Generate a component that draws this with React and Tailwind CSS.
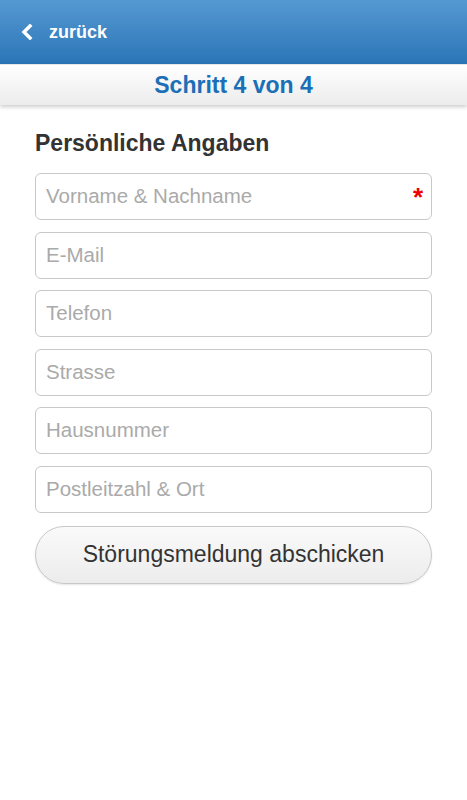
import React from "react";

const fields = [
  { label: "Vorname & Nachname", required: true },
  { label: "E-Mail" },
  { label: "Telefon" },
  { label: "Strasse" },
  { label: "Hausnummer" },
  { label: "Postleitzahl & Ort" },
];

export default function App() {
  return (
    <div className="min-h-screen bg-white" style={{ fontFamily: '"Liberation Sans", Arial, sans-serif' }}>
      {/* header */}
      <div className="h-[64px] flex items-center px-[21px] bg-gradient-to-b from-[#5599d2] to-[#2a75b7]">
        <svg width="12" height="16" viewBox="0 0 12 16" className="mr-[16px]">
          <path d="M9 2 L3 8 L9 14" fill="none" stroke="#fff" strokeWidth="3.5" strokeLinecap="square" />
        </svg>
        <span className="text-white font-bold text-[18px]">zurück</span>
      </div>

      {/* step bar */}
      <div className="h-[41px] flex items-center justify-center bg-gradient-to-b from-white to-[#ececec] border-t border-[#e8e8e8] shadow-[0_2px_4px_rgba(0,0,0,0.2)]">
        <span className="text-[#1b6fb7] font-bold text-[23px]">Schritt 4 von 4</span>
      </div>

      <div className="px-[35px] pt-[24px]">
        <h2 className="text-[#333] font-bold text-[23px] leading-[28px] mb-[16px]">Persönliche Angaben</h2>

        <div className="flex flex-col gap-[11.5px]">
          {fields.map((f) => (
            <div key={f.label} className="relative h-[47px] rounded-[6px] border border-[#c8c8c8] bg-white flex items-center px-[10px]">
              <input
                className="w-full bg-transparent outline-none text-[20.5px] text-[#333] placeholder:text-[#aaa]"
                placeholder={f.label}
              />
              {f.required && (
                <span className="absolute right-[8px] top-[10px] text-[#e00] font-bold text-[26px] leading-none">*</span>
              )}
            </div>
          ))}
        </div>

        <button className="mt-[13px] w-full h-[58px] rounded-full border border-[#c8c8c8] bg-gradient-to-b from-[#fafafa] to-[#ececec] text-[#333] text-[23px] shadow-[0_1px_2px_rgba(0,0,0,0.1)]">
          Störungsmeldung abschicken
        </button>
      </div>
    </div>
  );
}
